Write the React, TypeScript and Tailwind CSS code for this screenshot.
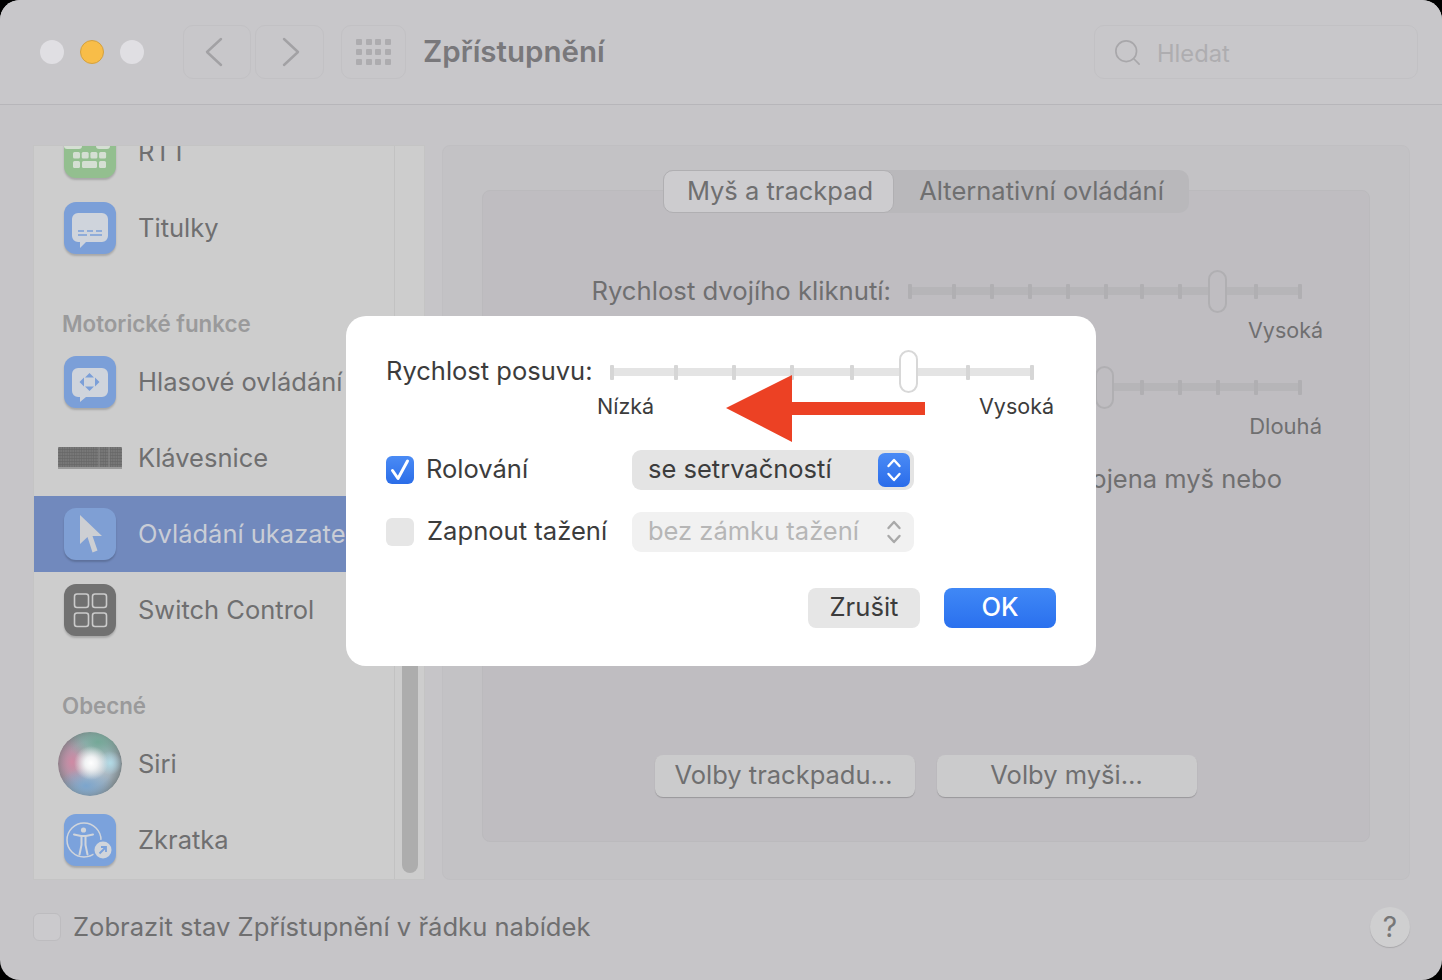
import React from 'react';
import { Search } from 'lucide-react';

function IconTile({ className, children }: { className: string; children: React.ReactNode }) {
  return (
    <div className={`flex h-[52px] w-[52px] items-center justify-center rounded-[12px] shadow-[0_2px_2px_rgba(0,0,0,0.18)] ${className}`}>
      {children}
    </div>
  );
}

function RttIcon() {
  const keys = [0, 1, 2, 3];
  return (
    <IconTile className="bg-[#93bf8f]">
      <svg width="52" height="52" viewBox="0 0 52 52" fill="#d5dfd3">
        <rect x="0" y="15" width="18" height="8" rx="3" />
        <rect x="32" y="15" width="14" height="8" rx="3" />
        {keys.map((k) => (
          <rect key={k} x={9 + k * 8.700} y="26" width="7" height="6.500" rx="1.500" />
        ))}
        <rect x="9" y="35" width="7" height="7" rx="1.500" />
        <rect x="18" y="35" width="15" height="7" rx="1.500" />
        <rect x="35" y="35" width="7" height="7" rx="1.500" />
      </svg>
    </IconTile>
  );
}

function CaptionIcon() {
  return (
    <IconTile className="bg-[#7b9fd8]">
      <svg width="52" height="52" viewBox="0 0 52 52">
        <path d="M14 11h24a6 6 0 0 1 6 6v17a6 6 0 0 1-6 6H22l-6 6v-6h-2a6 6 0 0 1-6-6V17a6 6 0 0 1 6-6z" fill="#cfd4dc" />
        <path d="M14 29h6M23 29h6M32 29h6M14 33h9M26 33h12" stroke="#7b9fd8" strokeWidth="1.600" />
      </svg>
    </IconTile>
  );
}

function VoiceIcon() {
  return (
    <IconTile className="bg-[#7b9fd8]">
      <svg width="52" height="52" viewBox="0 0 52 52">
        <path d="M14 12h24a6 6 0 0 1 6 6v17a6 6 0 0 1-6 6H22l-6 5v-5h-2a6 6 0 0 1-6-6V18a6 6 0 0 1 6-6z" fill="#cfd4dc" />
        <path d="M25.500 17l4.500 4.500h-9zM25.500 35l-4.500-4.500h9zM15.500 26l4.500-4.500v9zM35.500 26l-4.500 4.500v-9z" fill="#7b9fd8" />
      </svg>
    </IconTile>
  );
}

function KeyboardIcon() {
  return (
    <svg width="64" height="22" viewBox="0 0 64 22">
      <defs>
        <pattern id="keys" width="2.400" height="3" patternUnits="userSpaceOnUse">
          <rect width="2.400" height="3" fill="#666666" />
          <rect width="1.800" height="2.300" fill="#787878" />
        </pattern>
      </defs>
      <rect width="64" height="21" rx="1" fill="url(#keys)" />
      <path d="M41 0v21M51 0v21" stroke="#8c8c8c" strokeWidth="1" />
      <rect y="20" width="64" height="2" fill="#9b9b9b" />
    </svg>
  );
}

function PointerIcon() {
  return (
    <IconTile className="bg-[#7f9fd4]">
      <svg width="52" height="52" viewBox="0 0 52 52">
        <path d="M16 7v29l7.500-7 5 15.500 5-2-5-14.500H38z" fill="#cdcfd3" />
      </svg>
    </IconTile>
  );
}

function SwitchIcon() {
  return (
    <IconTile className="bg-[#717171]">
      <svg width="52" height="52" viewBox="0 0 52 52" fill="none" stroke="#cbcbcb" strokeWidth="1.600">
        <rect x="10.500" y="10" width="14" height="13.500" rx="2.500" />
        <rect x="28.500" y="10" width="14" height="13.500" rx="2.500" />
        <rect x="10.500" y="29" width="14" height="13.500" rx="2.500" />
        <rect x="28.500" y="29" width="14" height="13.500" rx="2.500" />
      </svg>
    </IconTile>
  );
}

function SiriIcon() {
  return (
    <svg width="64" height="64" viewBox="0 0 64 64">
      <defs>
        <radialGradient id="siriBase" cx="50%" cy="50%" r="50%">
          <stop offset="0" stopColor="#d8dde0" />
          <stop offset="0.7" stopColor="#a3b2bd" />
          <stop offset="1" stopColor="#7c8689" />
        </radialGradient>
        <radialGradient id="siriPink"><stop offset="0" stopColor="#d08aa4" /><stop offset="1" stopColor="#b56a85" stopOpacity="0" /></radialGradient>
        <radialGradient id="siriGreen"><stop offset="0" stopColor="#74a897" /><stop offset="1" stopColor="#74a897" stopOpacity="0" /></radialGradient>
        <radialGradient id="siriBlue"><stop offset="0" stopColor="#7ca5cd" /><stop offset="1" stopColor="#7ca5cd" stopOpacity="0" /></radialGradient>
        <radialGradient id="siriCyan"><stop offset="0" stopColor="#b2dbe6" /><stop offset="1" stopColor="#b2dbe6" stopOpacity="0" /></radialGradient>
        <radialGradient id="siriWhite"><stop offset="0" stopColor="#ffffff" /><stop offset="0.35" stopColor="#f1f3f4" /><stop offset="1" stopColor="#e8eaec" stopOpacity="0" /></radialGradient>
        <clipPath id="siriClip"><circle cx="32" cy="32" r="32" /></clipPath>
      </defs>
      <g clipPath="url(#siriClip)">
        <circle cx="32" cy="32" r="32" fill="url(#siriBase)" />
        <ellipse cx="14" cy="30" rx="20" ry="27" fill="url(#siriPink)" />
        <ellipse cx="40" cy="10" rx="30" ry="20" fill="url(#siriGreen)" />
        <ellipse cx="28" cy="54" rx="28" ry="18" fill="url(#siriBlue)" />
        <circle cx="52" cy="31" r="12" fill="url(#siriCyan)" />
        <circle cx="33" cy="31" r="17" fill="url(#siriWhite)" />
      </g>
    </svg>
  );
}

function ShortcutIcon() {
  return (
    <IconTile className="bg-[#7ba2dc]">
      <svg width="52" height="52" viewBox="0 0 52 52" fill="none">
        <circle cx="20" cy="26" r="17" stroke="#d1d5db" strokeWidth="1.500" />
        <circle cx="19.500" cy="16" r="2.600" fill="#d1d5db" />
        <path d="M10 20.500l7 1.500h5l7-1.500M17.500 23v8l-2 9.500M21.500 23v8l2 9.500" stroke="#d1d5db" strokeWidth="2" strokeLinecap="round" />
        <circle cx="39" cy="36" r="10.500" fill="#7ba2dc" />
        <circle cx="39" cy="36" r="8.500" fill="#d1d5db" />
        <path d="M35.500 39.500l6.500-6.500M37 33h5v5" stroke="#7ba2dc" strokeWidth="1.800" />
      </svg>
    </IconTile>
  );
}

function Chevron({ d }: { d: string }) {
  return (
    <svg width="20" height="30" viewBox="0 0 20 30" fill="none" stroke="#a2a1a4" strokeWidth="2.400" strokeLinecap="round" strokeLinejoin="round">
      <path d={d} />
    </svg>
  );
}

type RowProps = { icon: React.ReactNode; label: string; selected?: boolean };

function SidebarRow({ icon, label, selected }: RowProps) {
  return (
    <div className={`flex h-[76px] items-center ${selected ? 'bg-[#7189bd] text-[#c9cdd6]' : 'text-[#6f6f70]'}`}>
      <div className="flex w-[112px] shrink-0 justify-center">{icon}</div>
      <span className="-ml-[8px] whitespace-nowrap text-[25.500px] leading-none">{label}</span>
    </div>
  );
}

function SectionLabel({ label }: { label: string }) {
  return <div className="pb-[8px] pl-[28px] pt-[46px] text-[22.300px] font-semibold leading-[24px] text-[#9a9a9b]">{label}</div>;
}

type SliderProps = { ticks: number[]; knob: number; track: string; tick: string; knobClass: string; className: string };

function Slider({ ticks, knob, track, tick, knobClass, className }: SliderProps) {
  return (
    <div className={`relative h-[43px] ${className}`}>
      <div className={`absolute inset-x-0 h-[8px] ${track}`} />
      {ticks.map((t) => (
        <div key={t} className={`absolute h-[15px] w-[4px] rounded-[1px] ${tick}`} style={{ left: t }} />
      ))}
      <div className={`absolute top-0 h-[43px] w-[19px] rounded-full border-2 ${knobClass}`} style={{ left: knob }} />
    </div>
  );
}

function Stepper({ color }: { color: string }) {
  return (
    <svg width="16" height="28" viewBox="0 0 16 28" fill="none" stroke={color} strokeWidth="2.400" strokeLinecap="round" strokeLinejoin="round">
      <path d="M2.500 10L8 4l5.500 6M2.500 18L8 24l5.500-6" />
    </svg>
  );
}

function Dialog() {
  return (
    <div className="absolute left-[346px] top-[316px] flex h-[350px] w-[750px] flex-col rounded-[20px] bg-white px-[40px] text-[#3c3c3c]">
      <div className="flex h-[77px] items-end">
        <span className="w-[224px] whitespace-nowrap pb-[7px] text-[25.500px] leading-[30px]">Rychlost posuvu:</span>
        <Slider
          className="w-[424px]"
          ticks={[0, 64, 122, 180, 240, 356, 420]}
          knob={289}
          track="top-[18px] bg-[#e4e4e4]"
          tick="top-[15px] bg-[#d6d6d6]"
          knobClass="border-[#d8d8d8] bg-white"
        />
      </div>
      <div className="flex justify-between pl-[211px] pr-[2px] text-[21.500px] leading-[26px]">
        <span>Nízká</span>
        <span>Vysoká</span>
      </div>
      <div className="mt-[31px] flex h-[40px] items-center">
        <div className="flex h-[28px] w-[28px] items-center justify-center rounded-[6px] bg-gradient-to-b from-[#4a8bf5] to-[#2b6de8]">
          <svg width="28" height="28" viewBox="0 0 28 28" fill="none" stroke="#fff" strokeWidth="3" strokeLinecap="round" strokeLinejoin="round">
            <path d="M6.500 14.500l5.500 8L21.500 5" />
          </svg>
        </div>
        <span className="ml-[12px] w-[206px] pb-[2px] text-[25.500px]">Rolování</span>
        <div className="flex h-[40px] w-[282px] items-center justify-between rounded-[9px] bg-[#e4e4e4] pl-[16px] pr-[4px]">
          <span className="pb-[2px] text-[25.500px]">se setrvačností</span>
          <div className="flex h-[34px] w-[32px] items-center justify-center rounded-[7px] bg-gradient-to-b from-[#4b8bf5] to-[#2a6cea]">
            <Stepper color="#ffffff" />
          </div>
        </div>
      </div>
      <div className="mt-[22px] flex h-[40px] items-center">
        <div className="h-[28px] w-[28px] rounded-[6px] bg-[#e6e6e6]" />
        <span className="ml-[13px] w-[205px] whitespace-nowrap pb-[2px] text-[25.600px]">Zapnout tažení</span>
        <div className="flex h-[40px] w-[282px] items-center justify-between rounded-[9px] bg-[#f1f1f1] pl-[16px] pr-[12px]">
          <span className="pb-[2px] text-[25.500px] text-[#b6b6b6]">bez zámku tažení</span>
          <Stepper color="#a9a9a9" />
        </div>
      </div>
      <div className="mt-[36px] flex justify-end gap-[24px]">
        <button className="h-[40px] w-[112px] rounded-[8px] bg-[#e6e6e6] pb-[2px] text-[25.600px] leading-none">Zrušit</button>
        <button className="h-[40px] w-[112px] rounded-[8px] bg-gradient-to-b from-[#4088f6] to-[#2a70ee] pb-[2px] text-[25.500px] font-medium leading-none text-white">OK</button>
      </div>
      {/* red annotation arrow */}
      <svg className="absolute left-[380px] top-[59px]" width="200" height="67" viewBox="0 0 200 67">
        <path d="M0 33L66 0v27h133v13H66v27z" fill="#ec4124" />
      </svg>
    </div>
  );
}

export default function App() {
  return (
    <div className="h-[980px] w-[1442px] overflow-hidden bg-black font-[family-name:Inter,sans-serif]">
      <div className="relative flex h-[980px] w-[1442px] flex-col overflow-hidden rounded-[20px] bg-[#c6c5c8]">
        <header className="flex h-[105px] shrink-0 items-center border-b border-[#b7b6ba] bg-[#c8c7ca] pl-[40px] pr-[24px]">
          <div className="flex gap-[16px]">
            <div className="h-[24px] w-[24px] rounded-full bg-[#e0dfe3]" />
            <div className="h-[24px] w-[24px] rounded-full border border-[#d3a140] bg-[#f8bd48]" />
            <div className="h-[24px] w-[24px] rounded-full bg-[#e0dfe3]" />
          </div>
          <div className="ml-[39px] flex h-[54px] w-[68px] items-center justify-center rounded-[10px] border border-[#c2c1c4]">
            <div className="-ml-[6px]"><Chevron d="M17 2L3 15l14 13" /></div>
          </div>
          <div className="ml-[4px] flex h-[54px] w-[69px] items-center justify-center rounded-[10px] border border-[#c2c1c4]">
            <div className="ml-[3px]"><Chevron d="M3 2l14 13L3 28" /></div>
          </div>
          <div className="ml-[17px] grid h-[54px] w-[65px] grid-cols-4 place-content-center justify-items-center gap-x-[2.500px] gap-y-[4px] rounded-[10px] border border-[#c2c1c4] px-[13px]">
            {Array.from({ length: 12 }).map((_, i) => (
              <div key={i} className="h-[6px] w-[6px] rounded-[1px] bg-[#adacaf]" />
            ))}
          </div>
          <h1 className="ml-[17px] pb-[2px] text-[29.500px] font-semibold text-[#79787b]">Zpřístupnění</h1>
          <div className="ml-auto flex h-[54px] w-[324px] items-center gap-[14px] rounded-[10px] border border-[#c2c1c4] pl-[17px]">
            <Search size={31} strokeWidth={1.300} className="text-[#a8a7aa]" />
            <span className="pt-[3px] text-[23.700px] text-[#aeadb0]">Hledat</span>
          </div>
        </header>

        <div className="flex flex-1 gap-[17px] pl-[33px] pt-[40px]">
          <aside className="flex h-[735px] w-[392px] overflow-hidden border border-[#c4c4c4] bg-[#cdcdcd]">
            <div className="-mt-[32px] w-[361px] shrink-0 border-r border-[#c2c2c2]">
              <SidebarRow icon={<RttIcon />} label="RTT" />
              <SidebarRow icon={<CaptionIcon />} label="Titulky" />
              <SectionLabel label="Motorické funkce" />
              <SidebarRow icon={<VoiceIcon />} label="Hlasové ovládání" />
              <SidebarRow icon={<KeyboardIcon />} label="Klávesnice" />
              <SidebarRow icon={<PointerIcon />} label="Ovládání ukazatele" selected />
              <SidebarRow icon={<SwitchIcon />} label="Switch Control" />
              <SectionLabel label="Obecné" />
              <SidebarRow icon={<SiriIcon />} label="Siri" />
              <SidebarRow icon={<ShortcutIcon />} label="Zkratka" />
            </div>
            <div className="flex flex-1 justify-center pb-[6px] pt-[360px]">
              <div className="w-[16px] rounded-full bg-[#adadad]" />
            </div>
          </aside>

          <main className="flex h-[735px] w-[968px] flex-col items-center rounded-[8px] border border-[#c0bfc2] bg-[#c3c2c5] pt-[24px]">
            <div className="z-10 flex h-[43px] w-[526px] rounded-[10px] bg-[#b9b8bb] text-[25.500px] text-[#6f6f70]">
              <div className="flex w-[231px] items-center justify-center rounded-[10px] border border-[#b0afb2] bg-[#cdcccf] pl-[3px]">Myš a trackpad</div>
              <div className="flex flex-1 items-center justify-center whitespace-nowrap">Alternativní ovládání</div>
            </div>
            <section className="-mt-[23px] flex h-[652px] w-[888px] flex-col rounded-[8px] border border-[#bbbabd] bg-[#bfbdc1] pt-[79px] text-[#6f6f70]">
              <div className="flex items-center">
                <span className="w-[408px] text-right text-[25.700px]">Rychlost dvojího kliknutí:</span>
                <Slider
                  className="ml-[17px] w-[394px]"
                  ticks={[0, 44, 82, 120, 158, 196, 232, 270, 346, 390]}
                  knob={300}
                  track="top-[17px] bg-[#b6b5b8]"
                  tick="top-[14px] bg-[#b0afb2]"
                  knobClass="border-[#b0afb2] bg-[#bfbdc1]"
                />
              </div>
              <div className="mt-[4px] pr-[46px] text-right text-[21.500px] leading-[26px]">Vysoká</div>
              <div className="mt-[23px] flex">
                <Slider
                  className="ml-[425px] w-[394px]"
                  ticks={[232, 270, 308, 346, 390]}
                  knob={187}
                  track="top-[17px] bg-[#b6b5b8]"
                  tick="top-[14px] bg-[#b0afb2]"
                  knobClass="border-[#b0afb2] bg-[#bfbdc1]"
                />
              </div>
              <div className="mt-[4px] pr-[47px] text-right text-[22px] leading-[26px]">Dlouhá</div>
              <div className="mt-[21px] whitespace-nowrap pr-[87px] text-right text-[25.500px]">Ignorovat trackpad, je-li připojena myš nebo</div>
              <div className="mb-[44px] mt-auto flex justify-center gap-[22px]">
                <button className="h-[42px] w-[260px] rounded-[8px] bg-[#cbcbcc] pb-[2px] pr-[3px] text-[25.500px] leading-none shadow-[0_1px_1px_rgba(0,0,0,0.2)]">Volby trackpadu…</button>
                <button className="h-[42px] w-[260px] rounded-[8px] bg-[#cbcbcc] pb-[2px] pr-[1px] text-[25.500px] leading-none shadow-[0_1px_1px_rgba(0,0,0,0.2)]">Volby myši…</button>
              </div>
            </section>
          </main>
        </div>

        <footer className="flex h-[100px] shrink-0 items-center pb-[6px] pl-[33px] pr-[32px] text-[#6f6f70]">
          <div className="h-[28px] w-[28px] rounded-[6px] border border-[#bdbcbf] bg-[#cbcacd]" />
          <span className="ml-[12px] text-[25.600px]">Zobrazit stav Zpřístupnění v řádku nabídek</span>
          <div className="ml-auto flex h-[40px] w-[40px] items-center justify-center rounded-full bg-[#cfcfd0] text-[28px] text-[#777] shadow-[0_1px_1px_rgba(0,0,0,0.15)]">?</div>
        </footer>

        <Dialog />
      </div>
    </div>
  );
}
